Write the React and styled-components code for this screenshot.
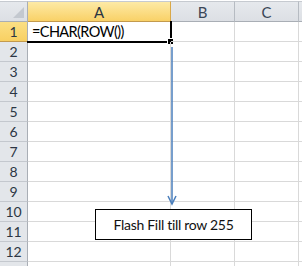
import React from "react";
import styled, { createGlobalStyle } from "styled-components";

const Global = createGlobalStyle`
  html, body { margin: 0; padding: 0; background: #fff; }
  body { font-family: Lato, "Noto Sans", sans-serif; }
`;

const Page = styled.div`
  position: relative;
  width: 302px;
  height: 266px;
  overflow: hidden;
  padding-top: 1px;
  box-sizing: border-box;
`;

const Grid = styled.div`
  display: grid;
  grid-template-columns: 28px 143px 64px 64px 40px;
  grid-auto-rows: 20px;
  grid-template-rows: 21px;
`;

const Corner = styled.div`
  position: relative;
  box-sizing: border-box;
  background: linear-gradient(#e6e9ed, #dcdfe4);
  border-top: 1px solid #c6cad0;
  border-right: 1px solid #a9aeb5;
  border-bottom: 1px solid #a9aeb5;

  &::after {
    content: "";
    position: absolute;
    right: 3px;
    bottom: 3px;
    width: 0;
    height: 0;
    border-left: 11px solid transparent;
    border-bottom: 11px solid #c3c8cf;
  }
`;

const ColHead = styled.div`
  box-sizing: border-box;
  display: flex;
  align-items: center;
  justify-content: center;
  font-size: 15px;
  color: ${({ $active }) => ($active ? "#2a3542" : "#3a4656")};
  background: ${({ $active }) =>
    $active
      ? "linear-gradient(#fdeaa6, #f9d167)"
      : "linear-gradient(#e6e9ed, #dcdfe4)"};
  border-top: 1px solid #c6cad0;
  border-right: 1px solid ${({ $active }) => ($active ? "#d9a848" : "#b6bbc2")};
  border-bottom: 1px solid ${({ $active }) => ($active ? "#c39a4d" : "#a9aeb5")};
  padding-top: 1px;
`;

const RowHead = styled.div`
  box-sizing: border-box;
  display: flex;
  align-items: center;
  justify-content: center;
  font-size: 14px;
  color: #2c3644;
  background: ${({ $active }) =>
    $active ? "linear-gradient(#fbdf84, #f8d062)" : "#e3e6ea"};
  border-right: 1px solid #a9aeb5;
  border-bottom: 1px solid ${({ $active }) => ($active ? "#c39a4d" : "#c4c8ce")};
`;

const Cell = styled.div`
  position: relative;
  box-sizing: border-box;
  border-right: 1px solid #d9d9d9;
  border-bottom: 1px solid #d9d9d9;
  font-size: 14.5px;
  letter-spacing: -0.6px;
  color: #000;
  padding-left: 4px;
  display: flex;
  align-items: center;
  white-space: nowrap;
`;

const Selection = styled.div`
  position: absolute;
  left: -1px;
  top: -1px;
  right: -2px;
  bottom: -2px;
  border-right: 2px solid #000;
  border-bottom: 2px solid #000;
  pointer-events: none;

  &::after {
    content: "";
    position: absolute;
    right: -4px;
    bottom: -4px;
    width: 5px;
    height: 5px;
    background: #000;
    border: 1px solid #fff;
  }
`;

const Arrow = styled.svg`
  position: absolute;
  left: 166px;
  top: 46px;
`;

const Callout = styled.div`
  position: absolute;
  left: 95px;
  top: 209px;
  width: 157px;
  height: 31px;
  box-sizing: border-box;
  border: 1px solid #000;
  background: #fff;
  display: flex;
  align-items: center;
  justify-content: center;
  font-size: 14px;
  letter-spacing: -0.3px;
  color: #111;
`;

const cols = ["A", "B", "C", ""];
const rows = Array.from({ length: 13 }, (_, i) => i + 1);

export default function App() {
  return (
    <Page>
      <Global />
      <Grid>
        <Corner />
        {cols.map((c, i) => (
          <ColHead key={c || "D"} $active={i === 0}>
            {c}
          </ColHead>
        ))}
        {rows.map((r) => (
          <React.Fragment key={r}>
            <RowHead $active={r === 1}>{r <= 12 ? r : ""}</RowHead>
            {cols.map((c) => (
              <Cell key={c || "D"}>
                {r === 1 && c === "A" && (
                  <>
                    =CHAR(ROW())
                    <Selection />
                  </>
                )}
              </Cell>
            ))}
          </React.Fragment>
        ))}
      </Grid>
      <Arrow width="12" height="162" viewBox="0 0 12 162">
        <line x1="6" y1="1" x2="6" y2="158" stroke="#4a7ebb" strokeWidth="1.5" />
        <polyline
          points="2,150 6,158 10,150"
          fill="none"
          stroke="#4a7ebb"
          strokeWidth="1.5"
        />
      </Arrow>
      <Callout>Flash Fill till row 255</Callout>
    </Page>
  );
}
